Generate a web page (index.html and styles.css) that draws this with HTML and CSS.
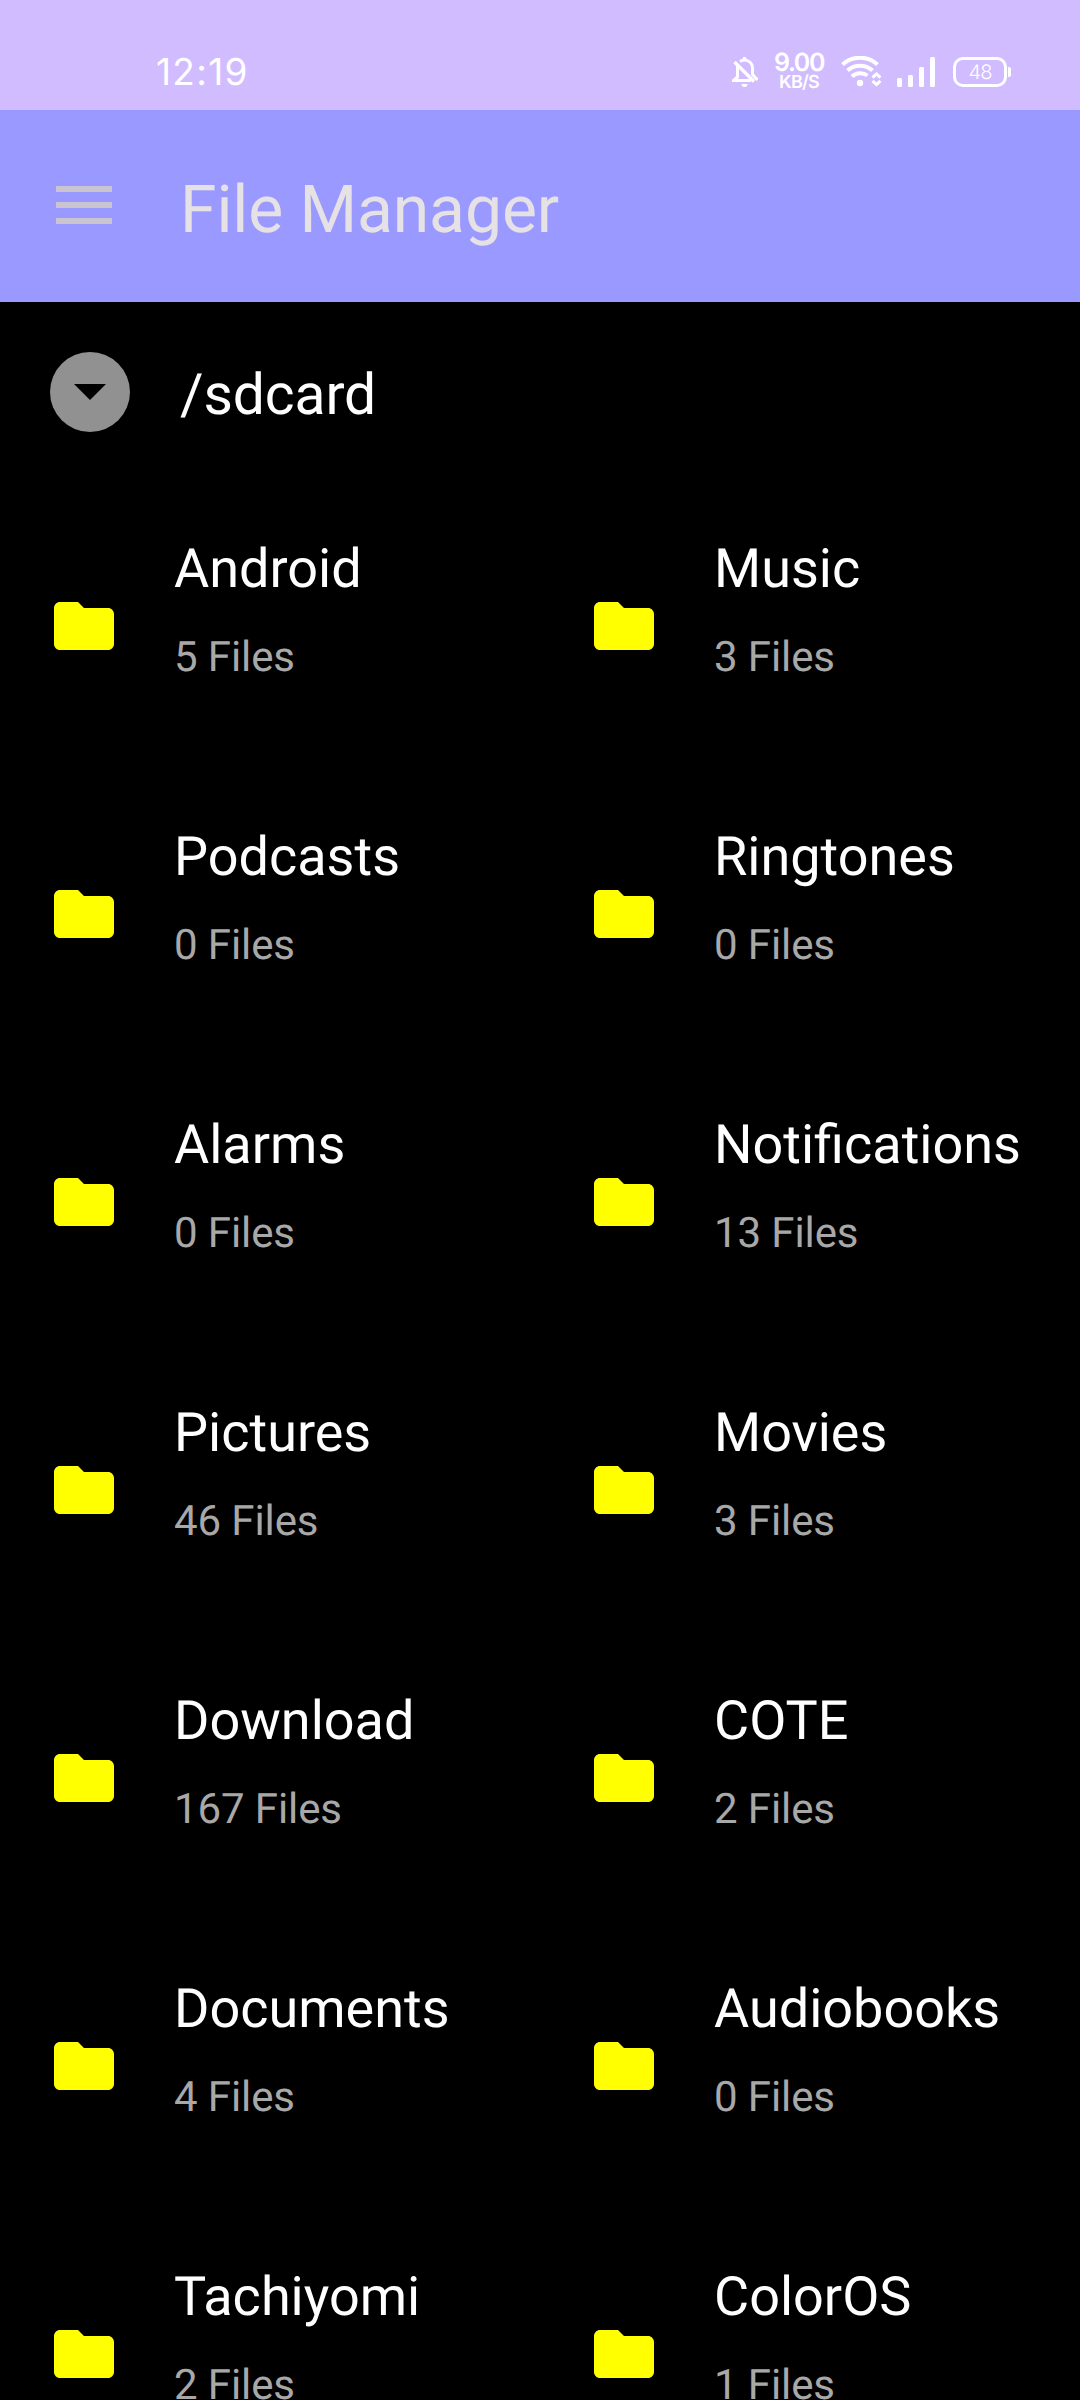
FILE: index.html
```
<!DOCTYPE html>
<html lang="en">
<head>
<meta charset="utf-8">
<title>File Manager</title>
<link rel="stylesheet" href="styles.css">
</head>
<body>
<svg class="defs" aria-hidden="true">
  <symbol id="folder" viewBox="0 0 24 24"><path d="M10 4H4c-1.100 0-2 .9-2 2v12c0 1.100.9 2 2 2h16c1.100 0 2-.9 2-2V8c0-1.100-.9-2-2-2h-8z"/></symbol>
</svg>
<div class="screen">
  <div class="status">
    <span class="time">12:19</span>
    <div class="tray">
      <svg class="bell" viewBox="0 0 26 32" fill="none" stroke="#fff" stroke-width="3"><path d="M5.500 9V21L1.500 24.500H19M8 5.500a8 8 0 0 1 12.500 6.500v6.500L25.500 24"/><path stroke-width="3.400" d="M2.500 6L22 25.500"/><path d="M12.500 1v3"/><path d="M9.500 28h6a3 3 0 0 1-6 0z" fill="#fff" stroke="none"/></svg>
      <div class="rate"><span class="rate-num">9.00</span><span class="rate-unit">KB/S</span></div>
      <svg class="wifi" viewBox="0 0 40 32" fill="none" stroke="#fff" stroke-width="4"><path d="M1.500 8.500a26 26 0 0 1 35 0M6.500 14.500a18.500 18.500 0 0 1 25 0M11 20.500a12 12 0 0 1 15.500-1"/><circle cx="19" cy="27" r="3.200" fill="#fff" stroke="none"/><path stroke-width="3" d="M31.500 21.500l4-3.500 4 3.500M31.500 25l4 3.500 4-3.500"/></svg>
      <svg class="signal" viewBox="0 0 38 30" fill="#fff"><rect y="21" width="5" height="9" rx="1.500"/><rect x="11" y="18" width="5" height="12" rx="1.500"/><rect x="22" y="10" width="5" height="20" rx="1.500"/><rect x="33" width="5" height="30" rx="1.500"/></svg>
      <div class="battery"><span>48</span></div><i class="nub"></i>
    </div>
  </div>
  <header class="toolbar">
    <svg class="menu" viewBox="0 0 56 38"><path d="M0 0h56v6H0zM0 16h56v6H0zM0 32h56v6H0z"/></svg>
    <h1 class="title">File Manager</h1>
  </header>
  <div class="path">
    <button class="up" aria-label="Storage"><svg viewBox="0 0 32 16"><path d="M0 0h32L16 16z"/></svg></button>
    <span class="path-text">/sdcard</span>
  </div>
  <main class="grid">
    <div class="item"><svg class="icon"><use href="#folder"/></svg><div class="info"><div class="name">Android</div><div class="count">5 Files</div></div></div>
    <div class="item"><svg class="icon"><use href="#folder"/></svg><div class="info"><div class="name">Music</div><div class="count">3 Files</div></div></div>
    <div class="item"><svg class="icon"><use href="#folder"/></svg><div class="info"><div class="name">Podcasts</div><div class="count">0 Files</div></div></div>
    <div class="item"><svg class="icon"><use href="#folder"/></svg><div class="info"><div class="name">Ringtones</div><div class="count">0 Files</div></div></div>
    <div class="item"><svg class="icon"><use href="#folder"/></svg><div class="info"><div class="name">Alarms</div><div class="count">0 Files</div></div></div>
    <div class="item"><svg class="icon"><use href="#folder"/></svg><div class="info"><div class="name">Notifications</div><div class="count">13 Files</div></div></div>
    <div class="item"><svg class="icon"><use href="#folder"/></svg><div class="info"><div class="name">Pictures</div><div class="count">46 Files</div></div></div>
    <div class="item"><svg class="icon"><use href="#folder"/></svg><div class="info"><div class="name">Movies</div><div class="count">3 Files</div></div></div>
    <div class="item"><svg class="icon"><use href="#folder"/></svg><div class="info"><div class="name">Download</div><div class="count">167 Files</div></div></div>
    <div class="item"><svg class="icon"><use href="#folder"/></svg><div class="info"><div class="name">COTE</div><div class="count">2 Files</div></div></div>
    <div class="item"><svg class="icon"><use href="#folder"/></svg><div class="info"><div class="name">Documents</div><div class="count">4 Files</div></div></div>
    <div class="item"><svg class="icon"><use href="#folder"/></svg><div class="info"><div class="name">Audiobooks</div><div class="count">0 Files</div></div></div>
    <div class="item"><svg class="icon"><use href="#folder"/></svg><div class="info"><div class="name">Tachiyomi</div><div class="count">2 Files</div></div></div>
    <div class="item"><svg class="icon"><use href="#folder"/></svg><div class="info"><div class="name">ColorOS</div><div class="count">1 Files</div></div></div>
  </main>
</div>
</body>
</html>
```
FILE: styles.css
```
* { box-sizing: border-box; }
body { margin: 0; background: #000; color: #fff; font-family: Roboto, sans-serif; text-rendering: geometricPrecision; }
svg { display: block; flex: none; }
.defs { display: none; }
.screen { width: 1080px; height: 2400px; overflow: hidden; display: flex; flex-direction: column; }

.status { height: 110px; flex: none; background: #d0bcff; display: flex; justify-content: space-between; padding: 50px 69px 0 156px; font-family: Inter, sans-serif; }
.time { font-size: 37px; line-height: 44px; letter-spacing: 1.300px; }
.tray { display: flex; align-items: center; height: 44px; }
.bell { width: 26px; height: 32px; margin-right: 16px; }
.rate { width: 50px; display: flex; flex-direction: column; align-items: center; font-weight: 600; margin-right: 17px; white-space: nowrap; }
.rate-num { font-size: 25px; line-height: 22px; letter-spacing: -1.400px; }
.rate-unit { font-size: 18px; line-height: 18px; letter-spacing: -0.800px; }
.wifi { width: 40px; height: 32px; margin-right: 16px; }
.signal { width: 38px; height: 30px; margin-right: 18px; }
.battery { width: 54px; height: 30px; border: 3px solid #fff; border-radius: 10px; display: flex; align-items: center; justify-content: center; font-size: 20px; line-height: 24px; letter-spacing: -0.800px; font-weight: 300; }
.nub { width: 3px; height: 10px; margin-left: 1px; background: #fff; border-radius: 0 2px 2px 0; }

.toolbar { height: 192px; flex: none; background: #99f; display: flex; align-items: flex-start; padding: 62px 56px 0; gap: 68px; }
.menu { width: 56px; height: 38px; margin-top: 14px; fill: #cac4d0; }
.title { margin: 0; color: #e6e1e5; font-size: 66px; font-weight: 400; line-height: 78px; letter-spacing: -0.100px; }

.path { height: 180px; flex: none; display: flex; align-items: center; padding: 0 50px; gap: 50px; }
.up { width: 80px; height: 80px; border: 0; border-radius: 50%; background: #919191; display: grid; place-items: center; padding: 0; }
.up svg { width: 32px; height: 16px; }
.path-text { font-size: 57px; line-height: 74px; padding-top: 5px; letter-spacing: -0.100px; }

.grid { display: grid; grid-template-columns: 540px 540px; grid-auto-rows: 288px; flex: none; }
.item { display: flex; align-items: center; padding-left: 48px; gap: 54px; }
.icon { width: 72px; height: 72px; fill: #ff0; }
.info { height: 176px; white-space: nowrap; }
.name { font-size: 54px; line-height: 64px; }
.count { font-size: 42px; line-height: 50px; margin-top: 31px; color: #a8a8a8; letter-spacing: -0.100px; }
```
